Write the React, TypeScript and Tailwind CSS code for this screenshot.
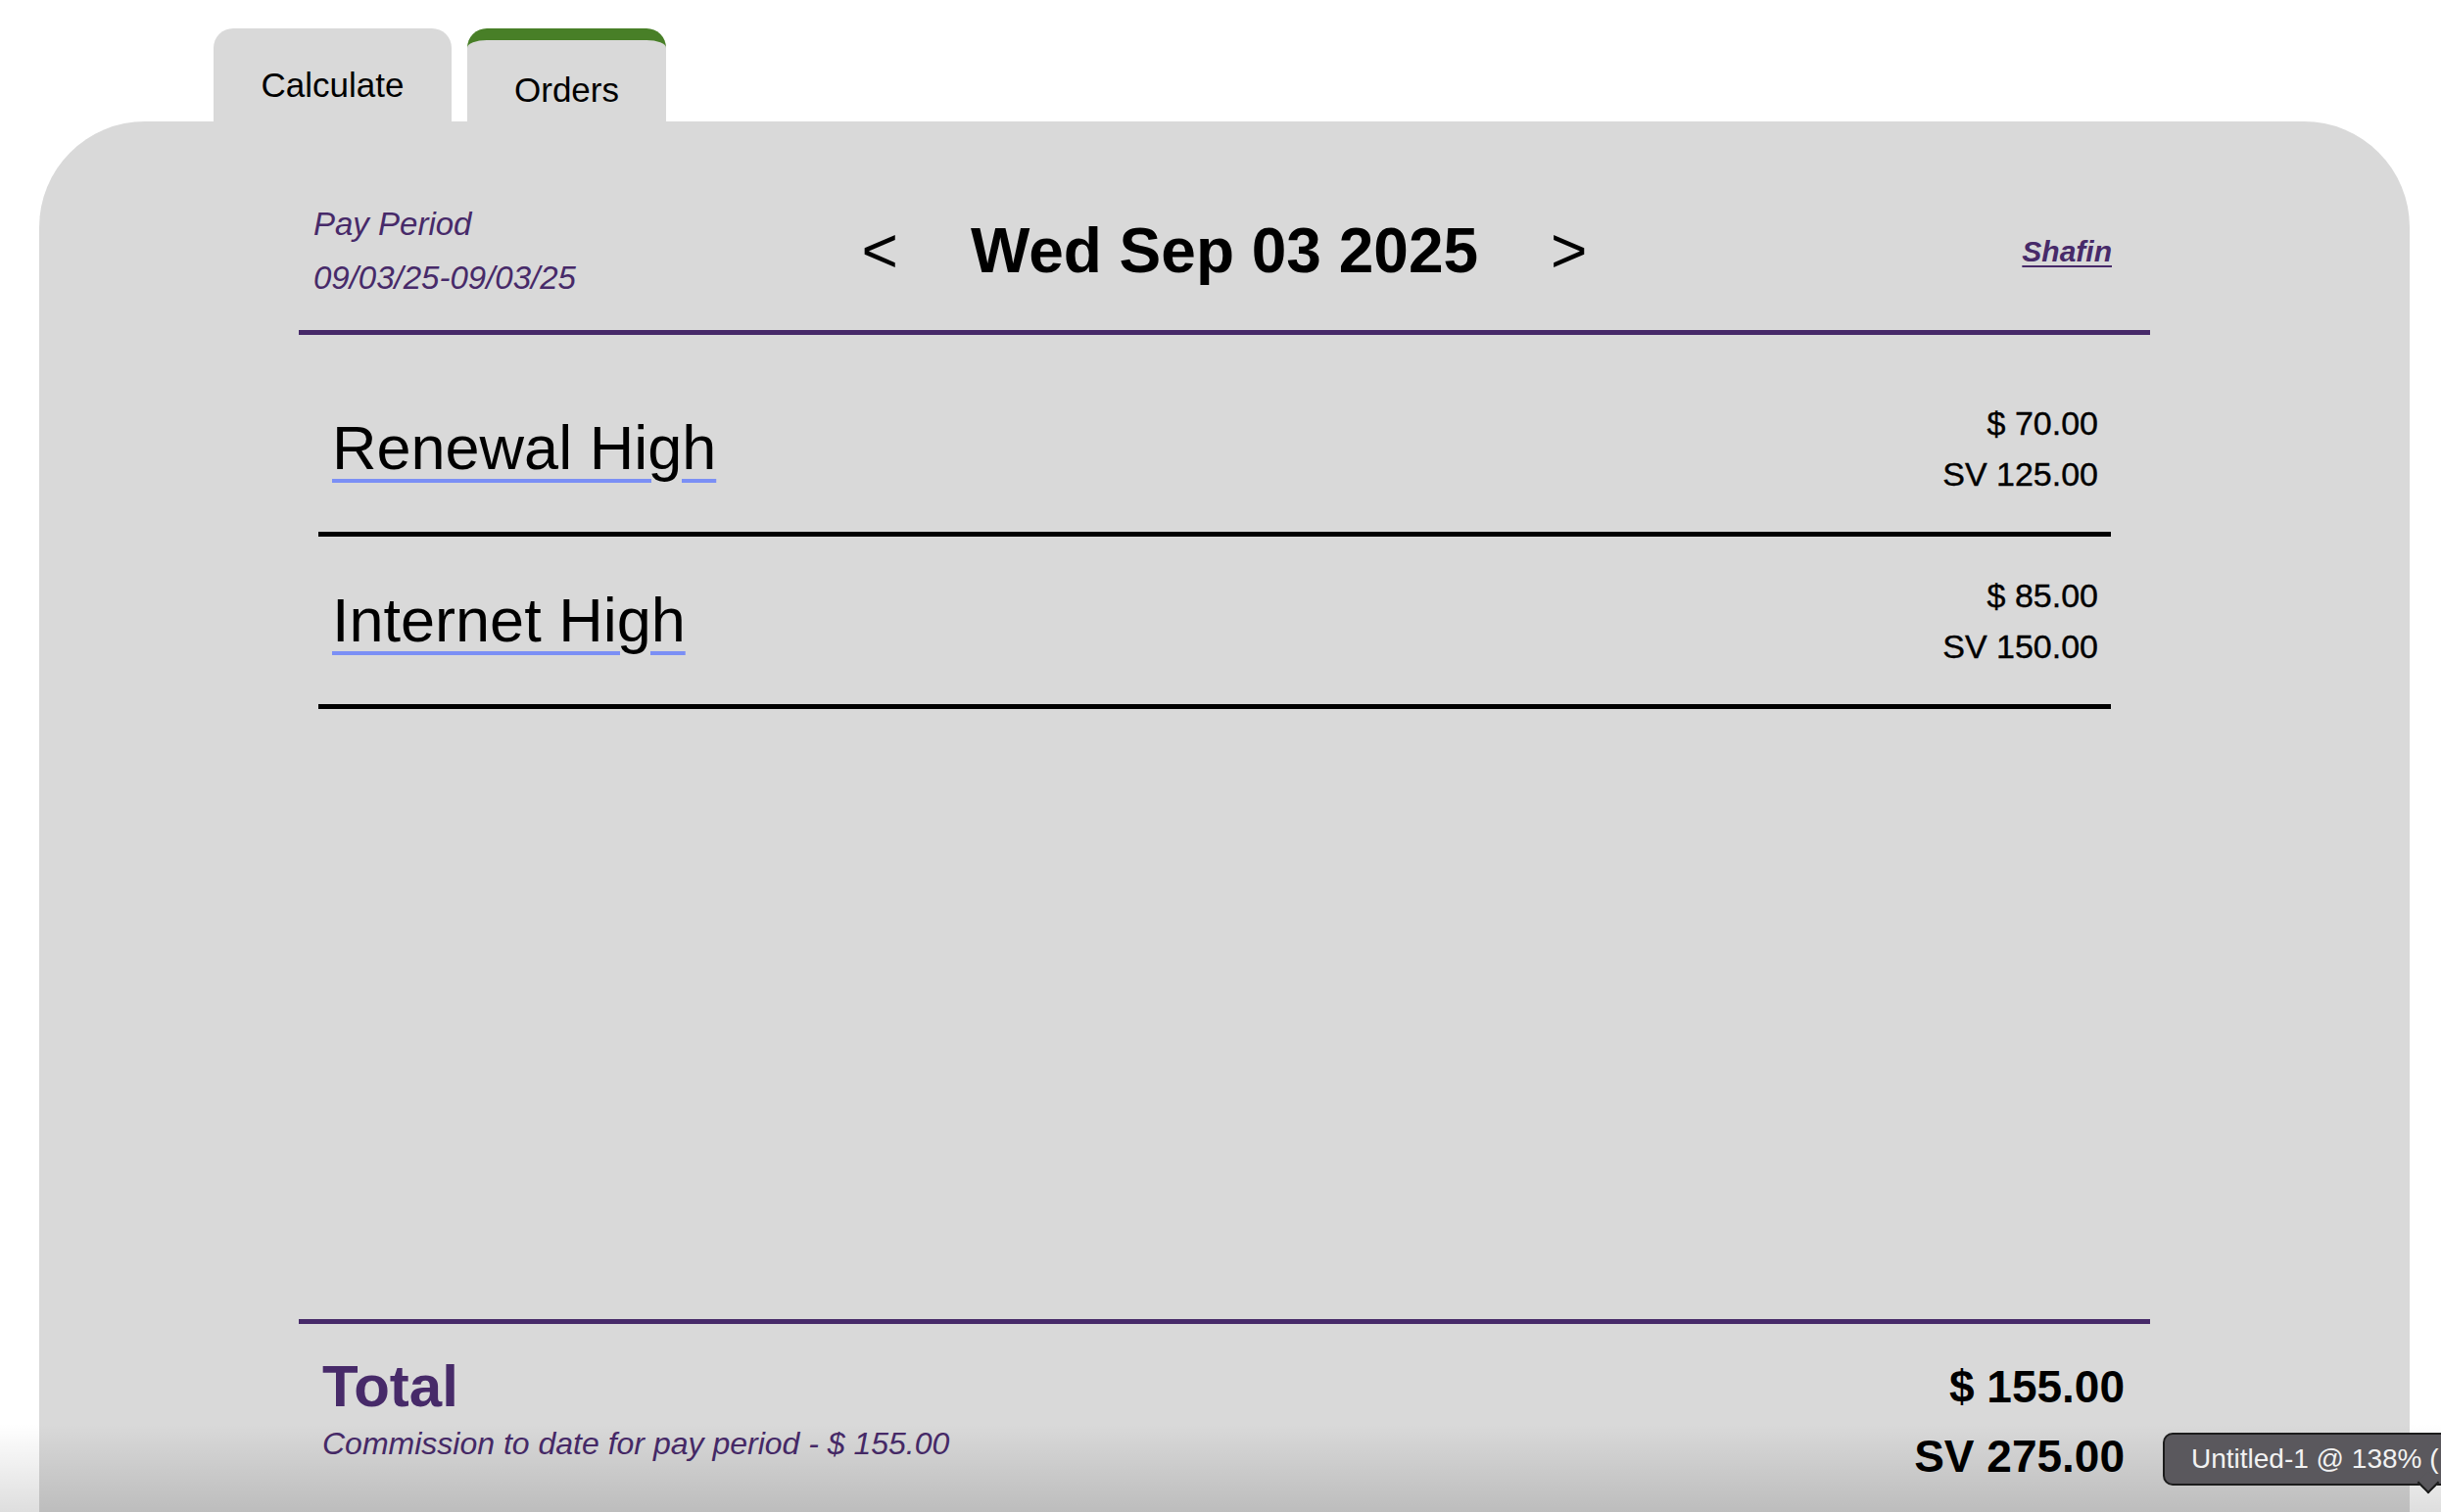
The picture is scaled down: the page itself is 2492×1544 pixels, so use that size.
export default function App() {
  const rows = [
    { name: "Renewal High", amount: "$ 70.00", sv: "SV 125.00" },
    { name: "Internet High", amount: "$ 85.00", sv: "SV 150.00" },
  ];
  return (
    <div className="relative h-[1544px] w-full overflow-hidden bg-white font-['Liberation_Sans',Arial,sans-serif] text-black">
      <div className="pt-[29px]">
        {/* Tabs */}
        <div className="ml-[218px] flex gap-[16px]">
          <div className="flex h-[95px] w-[243px] justify-center rounded-t-[20px] bg-[#d9d9d9] pt-[38px] text-[35px] leading-[40px]">
            Calculate
          </div>
          <div className="flex h-[95px] w-[203px] justify-center rounded-t-[20px] border-t-[12px] border-[#487f27] bg-[#d9d9d9] pt-[31px] text-[35px] leading-[40px]">
            Orders
          </div>
        </div>

        {/* Panel */}
        <div className="ml-[40px] mr-[32px] h-[1500px] rounded-t-[108px] bg-[#d9d9d9]">
          <div className="mx-[265px]">
            {/* Header */}
            <div className="grid grid-cols-[1fr_auto_1fr] items-center border-b-[5px] border-[#472a69] pb-[26px] pt-[77px]">
              <div className="pl-[15px] text-[33px] italic leading-[55px] text-[#472a69]">
                <div>Pay Period</div>
                <div>09/03/25-09/03/25</div>
              </div>
              <div className="flex items-baseline gap-[74px] text-[64px] leading-[64px]">
                <span className="font-normal">&lt;</span>
                <span className="font-semibold">Wed Sep 03 2025</span>
                <span className="font-normal">&gt;</span>
              </div>
              <div className="justify-self-end pr-[39px]">
                <span className="text-[30px] font-semibold italic text-[#472a69] underline decoration-2 underline-offset-[4px]">
                  Shafin
                </span>
              </div>
            </div>

            {/* List */}
            <div className="ml-[20px] mr-[40px] h-[1005px] pt-[30px]">
              {rows.map((r) => (
                <div
                  key={r.name}
                  className="flex h-[176px] items-center justify-between border-b-[5px] border-black pl-[14px] pr-[13px]"
                >
                  <span className="text-[63px] leading-[63px] underline decoration-[#7b8ff5] decoration-4 underline-offset-[10px]">
                    {r.name}
                  </span>
                  <div className="text-right text-[34px] leading-[52px] [-webkit-text-stroke:0.4px_black]">
                    <div>{r.amount}</div>
                    <div>{r.sv}</div>
                  </div>
                </div>
              ))}
            </div>

            {/* Footer */}
            <div className="flex items-start justify-between border-t-[5px] border-[#472a69] pl-[24px] pr-[26px] pt-[29px]">
              <div className="mt-[5px] text-[#472a69]">
                <div className="text-[60px] font-semibold leading-[60px]">Total</div>
                <div className="mt-[10px] text-[32px] italic leading-[36px]">
                  Commission to date for pay period - $ 155.00
                </div>
              </div>
              <div className="text-right text-[46px] font-semibold leading-[71px]">
                <div>$ 155.00</div>
                <div>SV 275.00</div>
              </div>
            </div>
          </div>
        </div>
      </div>

      {/* bottom screen shading */}
      <div className="pointer-events-none absolute inset-x-0 bottom-0 h-[90px] bg-linear-to-b from-transparent to-black/[0.13]" />

      {/* Tooltip overlay */}
      <div className="absolute left-[2208px] top-[1463px] h-[54px] w-[320px] rounded-[10px] border-2 border-[#1c1c1c] bg-[#5a585d]">
        <div className="absolute left-[261px] top-[41px] h-[16px] w-[16px] rotate-45 border-b-2 border-r-2 border-[#1c1c1c] bg-[#5a585d]" />
        <div className="relative whitespace-nowrap pl-[27px] text-[28px] leading-[50px] text-[#f2f2f2]">
          Untitled-1 @ 138% (
        </div>
      </div>
    </div>
  );
}
